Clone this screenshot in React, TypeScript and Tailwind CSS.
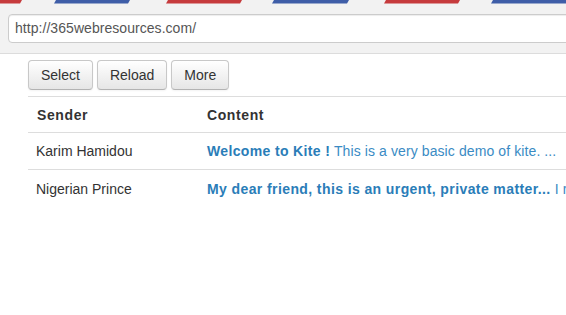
import React from "react";

const stripes: { x: number; w: number; c: string }[] = [
  { x: -54, w: 74, c: "#c63b3d" },
  { x: 54, w: 74, c: "#3f5ea8" },
  { x: 166, w: 74, c: "#c63b3d" },
  { x: 272, w: 75, c: "#3f5ea8" },
  { x: 384, w: 74, c: "#c63b3d" },
  { x: 491, w: 75, c: "#3f5ea8" },
];

function Stripe() {
  return (
    <svg width="566" height="5" viewBox="0 0 566 5" className="block">
      {stripes.map((s, i) => (
        <polygon
          key={i}
          points={`${s.x + 2},0 ${s.x + s.w + 2},0 ${s.x + s.w},3.6 ${s.x},3.6`}
          fill={s.c}
        />
      ))}
    </svg>
  );
}

function Btn({ label }: { label: string }) {
  return (
    <button className="h-[30px] px-3 rounded-[4px] border border-[#c8c8c8] border-b-[#b3b3b3] bg-gradient-to-b from-white to-[#e6e6e6] text-[14px] text-[#333] shadow-[inset_0_1px_0_rgba(255,255,255,0.2),0_1px_2px_rgba(0,0,0,0.05)]">
      {label}
    </button>
  );
}

export default function App() {
  return (
    <div
      className="w-[566px] h-[315px] overflow-hidden bg-white"
      style={{ fontFamily: '"Liberation Sans", Arial, sans-serif' }}
    >
      <div className="bg-[#f2f2f2] h-[54px] border-b border-[#dcdcdc]">
        <Stripe />
        <div className="pl-[8px] pt-[9px]">
          <div className="w-[600px] h-[29px] bg-white border border-[#cccccc] rounded-[4px] flex items-center pl-[6px] text-[14px] text-[#555] tracking-[0.05px] shadow-[inset_0_1px_1px_rgba(0,0,0,0.075)]">
            http://365webresources.com/
          </div>
        </div>
      </div>
      <div className="pl-[28px] pt-[6px]">
        <div className="flex gap-[4px]">
          <Btn label="Select" />
          <Btn label="Reload" />
          <Btn label="More" />
        </div>
        <div className="mt-[6px] w-[700px] border-t border-[#dddddd] text-[14px] whitespace-nowrap">
          <div className="flex h-[36px] items-center border-b border-[#dddddd] font-bold text-[#333] tracking-[0.6px] pt-[1px]">
            <div className="w-[171px] pl-[9px]">Sender</div>
            <div className="pl-[8px]">Content</div>
          </div>
          <div className="flex h-[37px] items-center border-b border-[#dddddd] pt-[1px]">
            <div className="w-[171px] pl-[8px] text-[#333]">Karim Hamidou</div>
            <div className="pl-[8px] text-[#3a8bc4] tracking-[0.1px]">
              <span className="font-bold text-[#2a7db8] tracking-[0.35px]">Welcome to Kite !</span> This is a very basic demo of kite. ...
            </div>
          </div>
          <div className="flex h-[37px] items-center pt-[1px]">
            <div className="w-[171px] pl-[8px] text-[#333]">Nigerian Prince</div>
            <div className="pl-[8px] text-[#3a8bc4] tracking-[0.1px]">
              <span className="font-bold text-[#2a7db8] tracking-[0.4px]">My dear friend, this is an urgent, private matter...</span> I require your assistance ...
            </div>
          </div>
        </div>
      </div>
    </div>
  );
}
